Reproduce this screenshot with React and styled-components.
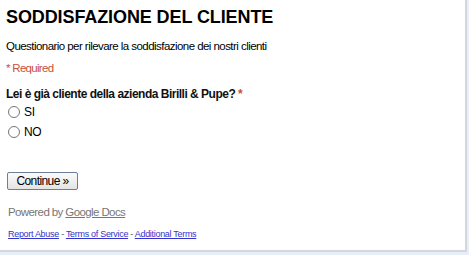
import React, { useState } from "react"
import styled, { createGlobalStyle } from "styled-components"

const GlobalStyle = createGlobalStyle`
  body {
    margin: 0;
    background: #e8eef7;
    font-family: "Liberation Sans", Arial, sans-serif;
  }
`

function App() {
  const [answer, setAnswer] = useState("")

  return (
    <>
      <GlobalStyle />
      <Panel>
        <Title>SODDISFAZIONE DEL CLIENTE</Title>
        <Description>Questionario per rilevare la soddisfazione dei nostri clienti</Description>
        <Required>* Required</Required>
        <Question>
          Lei è già cliente della azienda Birilli &amp; Pupe? <Star>*</Star>
        </Question>
        <Options>
          {["SI", "NO"].map(opt => (
            <Option key={opt}>
              <Radio
                type="radio"
                name="cliente"
                checked={answer === opt}
                onChange={() => setAnswer(opt)}
              />
              {opt}
            </Option>
          ))}
        </Options>
        <ContinueButton>Continue »</ContinueButton>
        <Powered>
          Powered by <a href="#">Google Docs</a>
        </Powered>
        <Footer>
          <a href="#">Report Abuse</a> - <a href="#">Terms of Service</a> -{" "}
          <a href="#">Additional Terms</a>
        </Footer>
      </Panel>
    </>
  )
}

export default App

const Panel = styled.div`
  width: 467px;
  height: 252px;
  box-sizing: border-box;
  background: #fff;
  border-right: 2px solid #d4d8de;
  border-bottom: 2px solid #d4d8de;
  padding: 6px 0 0 6px;
  display: flex;
  flex-direction: column;
`
const Title = styled.h1`
  margin: 0;
  font-size: 18px;
  font-weight: bold;
  line-height: 22px;
  letter-spacing: -0.1px;
  color: #000;
`
const Description = styled.div`
  margin-top: 11px;
  font-size: 11.5px;
  line-height: 14px;
  letter-spacing: -0.55px;
  color: #000;
`
const Required = styled.div`
  margin-top: 8px;
  font-size: 11.5px;
  line-height: 14px;
  letter-spacing: -0.7px;
  color: #c8503a;
`
const Question = styled.div`
  margin-top: 12px;
  font-size: 12px;
  font-weight: bold;
  line-height: 14px;
  letter-spacing: -0.5px;
  color: #111;
`
const Star = styled.span`
  color: #c8503a;
`
const Options = styled.div`
  margin-top: 4px;
  display: flex;
  flex-direction: column;
  gap: 6px;
`
const Option = styled.label`
  display: flex;
  align-items: center;
  gap: 4px;
  font-size: 12px;
  line-height: 14px;
  letter-spacing: -0.3px;
`
const Radio = styled.input`
  margin: 0 0 0 2px;
  width: 12px;
  height: 12px;
`
const ContinueButton = styled.button`
  align-self: flex-start;
  margin: 33px 0 0 1px;
  width: 71px;
  height: 18px;
  padding: 0;
  font-family: "Liberation Sans", Arial, sans-serif;
  font-size: 12px;
  letter-spacing: -0.6px;
  color: #000;
  background: linear-gradient(#fbfbfb, #e4e4e4);
  border: 1px solid #6b7f96;
  border-radius: 2px;
`
const Powered = styled.div`
  margin: 15px 0 0 2px;
  font-size: 11.5px;
  line-height: 14px;
  letter-spacing: -0.6px;
  color: #777;

  a {
    color: #777;
  }
`
const Footer = styled.div`
  margin: 9px 0 0 2px;
  font-size: 9px;
  line-height: 12px;
  letter-spacing: -0.3px;
  color: #555;

  a {
    color: #3333cc;
  }
`
